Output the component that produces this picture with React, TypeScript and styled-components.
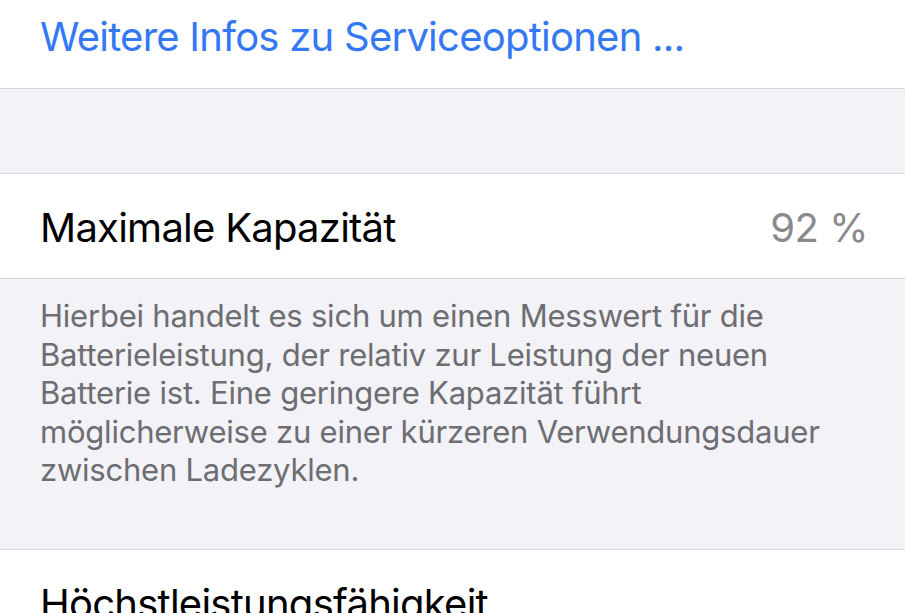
import styled, { createGlobalStyle } from 'styled-components'

const GlobalStyle = createGlobalStyle`
  html, body {
    margin: 0;
    padding: 0;
    background: #f2f2f7;
  }
  body {
    font-family: Inter, "Noto Sans", "Liberation Sans", sans-serif;
    -webkit-font-smoothing: antialiased;
  }
`

export default function App() {
  return (
    <>
      <GlobalStyle />
      <Page>
        {/* Link cell at the end of the previous group */}
        <Group>
          <LinkRow>
            <LinkText>Weitere Infos zu Serviceoptionen ...</LinkText>
          </LinkRow>
        </Group>

        <Spacer />

        {/* Maximum capacity */}
        <Group>
          <Row>
            <Label>Maximale Kapazität</Label>
            <Value>92 %</Value>
          </Row>
        </Group>
        <Footer>
          Hierbei handelt es sich um einen Messwert für die Batterieleistung, der relativ zur
          Leistung der neuen Batterie ist. Eine geringere Kapazität führt möglicherweise zu
          einer kürzeren Verwendungsdauer zwischen Ladezyklen.
        </Footer>

        {/* Peak performance capability */}
        <Group>
          <TallRow>
            <Label>Höchstleistungsfähigkeit</Label>
          </TallRow>
        </Group>
      </Page>
    </>
  )
}

const Page = styled.div`
  width: 905px;
  height: 613px;
  overflow: hidden;
  background: #f2f2f7;
`

const Group = styled.div`
  background: #ffffff;
  border-top: 1px solid #d6d6da;
  border-bottom: 1px solid #d6d6da;

  &:first-child {
    border-top: none;
  }
`

const LinkRow = styled.div`
  height: 88px;
  padding: 0 40px 14px;
  box-sizing: border-box;
  display: flex;
  align-items: center;
`

const LinkText = styled.span`
  font-size: 40px;
  line-height: 1.2;
  color: #3478f6;
  letter-spacing: -0.75px;
`

const Spacer = styled.div`
  height: 84px;
`

const Row = styled.div`
  height: 104px;
  padding: 3px 37px 0 40px;
  box-sizing: border-box;
  display: flex;
  align-items: center;
  justify-content: space-between;
`

const TallRow = styled.div`
  padding: 30px 40px 0;
  height: 100px;
  box-sizing: border-box;
`

const Label = styled.span`
  font-size: 40px;
  line-height: 1.2;
  color: #000000;
  letter-spacing: -0.75px;
`

const Value = styled.span`
  font-size: 40px;
  line-height: 1.2;
  color: #8a8a8e;
  letter-spacing: -0.5px;
`

const Footer = styled.div`
  padding: 18px 40px 59px;
  font-size: 31px;
  line-height: 38.5px;
  color: #6d6d72;
  letter-spacing: -0.22px;
`
